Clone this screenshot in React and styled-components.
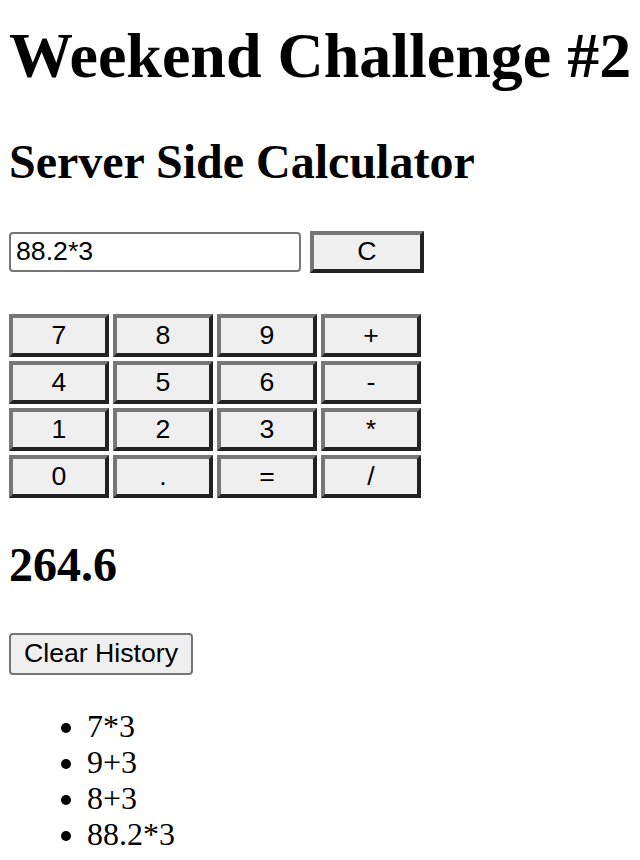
import React from "react";
import styled, { createGlobalStyle } from "styled-components";

const GlobalStyle = createGlobalStyle`
  html, body {
    margin: 0;
    padding: 0;
    background: #fff;
  }
  body {
    font-family: "Liberation Serif", "Times New Roman", serif;
    color: #000;
  }
`;

const Page = styled.div`
  padding: 19px 9px 0 9px;
`;

const Title = styled.h1`
  margin: 0;
  font-size: 64px;
  line-height: 1.15;
  font-weight: bold;
  white-space: nowrap;
`;

const Heading = styled.h2`
  margin: ${(p) => p.$top}px 0 0 0;
  font-size: 48px;
  line-height: 1.15;
  font-weight: bold;
`;

const InputRow = styled.div`
  display: flex;
  align-items: center;
  gap: 9px;
  height: 42px;
  margin-top: 42px;
`;

const Display = styled.input`
  box-sizing: border-box;
  width: 292px;
  height: 40px;
  margin: 0;
  padding: 0 5px;
  border: 2px solid #767676;
  border-radius: 4px;
  font-family: "Liberation Sans", Arial, sans-serif;
  font-size: 26.67px;
  color: #000;
  background: #fff;
  outline: none;
`;

const Key = styled.button`
  box-sizing: border-box;
  width: ${(p) => p.$width || 100}px;
  height: ${(p) => p.$height || 43}px;
  margin: 0;
  padding: 0;
  background: #efefef;
  border-style: solid;
  border-width: 4px;
  border-color: #767676 #222 #222 #767676;
  font-family: "Liberation Sans", Arial, sans-serif;
  font-size: 26.67px;
  color: #000;
  cursor: pointer;
`;

const Keypad = styled.div`
  display: grid;
  grid-template-columns: repeat(4, 100px);
  grid-auto-rows: 43px;
  gap: 4px;
  margin-top: 41px;
`;

const HistoryButton = styled.button`
  box-sizing: border-box;
  display: block;
  width: 184px;
  height: 42px;
  margin: 41px 0 0 0;
  padding: 0 12px;
  background: #efefef;
  border: 2px solid #767676;
  border-radius: 4px;
  font-family: "Liberation Sans", Arial, sans-serif;
  font-size: 26.67px;
  color: #000;
  cursor: pointer;
`;

const HistoryList = styled.ul`
  margin: 33px 0 0 0;
  padding-left: 78px;
  font-size: 32px;
  line-height: 36px;
`;

const HistoryItem = styled.li`
  list-style: disc;
`;

const keys = ["7", "8", "9", "+", "4", "5", "6", "-", "1", "2", "3", "*", "0", ".", "=", "/"];
const history = ["7*3", "9+3", "8+3", "88.2*3"];

export default function App() {
  return (
    <>
      <GlobalStyle />
      <Page>
        <Title>Weekend Challenge #2</Title>
        <Heading $top={41}>Server Side Calculator</Heading>
        <InputRow>
          <Display defaultValue="88.2*3" />
          <Key $width={114} $height={42}>C</Key>
        </InputRow>
        <Keypad>
          {keys.map((k) => (
            <Key key={k}>{k}</Key>
          ))}
        </Keypad>
        <Heading $top={39}>264.6</Heading>
        <HistoryButton>Clear History</HistoryButton>
        <HistoryList>
          {history.map((h) => (
            <HistoryItem key={h}>{h}</HistoryItem>
          ))}
        </HistoryList>
      </Page>
    </>
  );
}
